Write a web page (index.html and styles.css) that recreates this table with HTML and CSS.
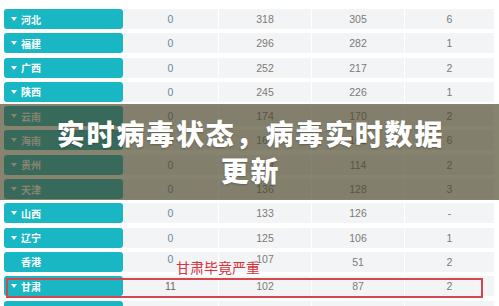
FILE: index.html
```html
<!DOCTYPE html>
<html lang="zh">
<head>
<meta charset="utf-8">
<link rel="stylesheet" href="styles.css">
</head>
<body>
<div class="table">
  <div class="row"><div class="name"><i class="tri"></i>河北</div><div class="c c2">0</div><div class="c">318</div><div class="c">305</div><div class="c">6</div></div>
  <div class="row"><div class="name"><i class="tri"></i>福建</div><div class="c c2">0</div><div class="c">296</div><div class="c">282</div><div class="c">1</div></div>
  <div class="row"><div class="name"><i class="tri"></i>广西</div><div class="c c2">0</div><div class="c">252</div><div class="c">217</div><div class="c">2</div></div>
  <div class="row"><div class="name"><i class="tri"></i>陕西</div><div class="c c2">0</div><div class="c">245</div><div class="c">226</div><div class="c">1</div></div>
  <div class="row"><div class="name"><i class="tri"></i>云南</div><div class="c c2">0</div><div class="c">174</div><div class="c">170</div><div class="c">2</div></div>
  <div class="row"><div class="name"><i class="tri"></i>海南</div><div class="c c2">0</div><div class="c">168</div><div class="c">165</div><div class="c">6</div></div>
  <div class="row"><div class="name"><i class="tri"></i>贵州</div><div class="c c2">0</div><div class="c">119</div><div class="c">114</div><div class="c">2</div></div>
  <div class="row"><div class="name"><i class="tri"></i>天津</div><div class="c c2">0</div><div class="c">136</div><div class="c">128</div><div class="c">3</div></div>
  <div class="row"><div class="name"><i class="tri"></i>山西</div><div class="c c2">0</div><div class="c">133</div><div class="c">126</div><div class="c">-</div></div>
  <div class="row"><div class="name"><i class="tri"></i>辽宁</div><div class="c c2">0</div><div class="c">125</div><div class="c">106</div><div class="c">1</div></div>
  <div class="row"><div class="name noarrow">香港</div><div class="c c2 sup">0</div><div class="c sup">107</div><div class="c">51</div><div class="c">2</div></div>
  <div class="row"><div class="name"><i class="tri"></i>甘肃</div><div class="c c2 dark">11</div><div class="c">102</div><div class="c">87</div><div class="c">2</div></div>
  <div class="row"><div class="name"></div><div class="c c2"></div><div class="c"></div><div class="c"></div><div class="c"></div></div>
</div>
<div class="note">甘肃毕竟严重</div>
<div class="mark"></div>
<div class="band"><h1 class="title">实时病毒状态，病毒实时数据<br>更新</h1></div>
</body>
</html>
```
FILE: styles.css
```css
html, body {
  margin: 0;
  padding: 0;
  background: #ffffff;
  width: 499px;
  height: 306px;
  overflow: hidden;
}
body {
  position: relative;
  font-family: "Liberation Sans", "Noto Sans CJK SC", sans-serif;
}
.table {
  padding: 9px 0 0 4px;
  display: flex;
  flex-direction: column;
  gap: 4.3px;
}
.row {
  display: grid;
  grid-template-columns: 119px 95px 93px 93px 90px;
  height: 20px;
}
.name {
  background: #19b6c4;
  border-radius: 3px;
  color: #ffffff;
  font-family: "Noto Sans CJK SC", sans-serif;
  font-weight: 700;
  font-size: 10px;
  display: flex;
  align-items: center;
  padding-left: 7px;
  gap: 4px;
}
.name.noarrow {
  padding-left: 17px;
}
.tri {
  width: 0;
  height: 0;
  border-left: 3px solid transparent;
  border-right: 3px solid transparent;
  border-top: 4px solid #ffffff;
}
.c {
  background: #f3f4f5;
  border-left: 1px solid #ffffff;
  color: #7a7a7a;
  font-size: 10.5px;
  display: flex;
  align-items: center;
  justify-content: center;
}
.c2 {
  border-left: 0;
  color: #6a88aa;
}
.c2.dark {
  color: #666;
}
.sup {
  align-items: flex-start;
  padding-top: 1px;
}
.note {
  position: absolute;
  left: 176px;
  top: 258px;
  font-family: "Noto Sans CJK SC", sans-serif;
  font-size: 14px;
  line-height: 18px;
  color: #d6333b;
}
.mark {
  position: absolute;
  left: 6px;
  top: 278px;
  width: 473px;
  height: 16px;
  border: 2px solid #d4474f;
}
.band {
  position: absolute;
  left: 0;
  top: 104px;
  width: 499px;
  height: 96px;
  background: rgba(71, 67, 37, 0.66);
  display: flex;
  align-items: center;
  justify-content: center;
}
.title {
  margin: 0;
  text-align: center;
  color: #ffffff;
  font-family: "Noto Sans CJK SC", sans-serif;
  font-weight: 900;
  font-size: 28px;
  letter-spacing: 1.8px;
  line-height: 37px;
  padding-left: 2px;
  text-shadow: 0 1px 2px rgba(0,0,0,0.25);
}
```
